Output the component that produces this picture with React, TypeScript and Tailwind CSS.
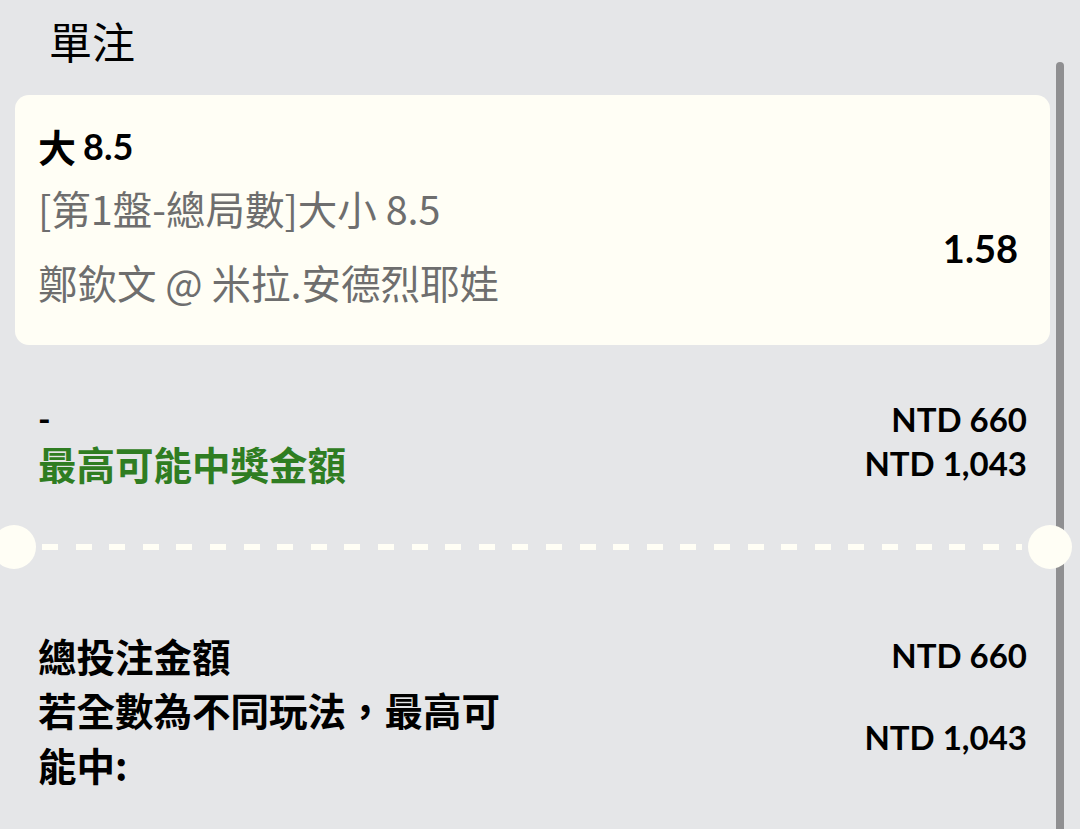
import React from 'react';

const font = { fontFamily: "Lato, 'Noto Sans CJK TC', sans-serif" };
const cjk = { fontFamily: "'Noto Sans CJK TC', sans-serif" };

function Dashes() {
  return (
    <div className="relative h-[46px] flex items-center">
      <div className="absolute left-[-8px] top-[1px] w-[44px] h-[44px] rounded-full bg-[#fffef5] z-10" />
      <div className="flex-1 ml-[42px] mr-[58px] h-[6px] bg-[repeating-linear-gradient(90deg,#fffef5_0_16px,transparent_16px_33.6px)]" />
      <div className="absolute left-[1028px] top-[1px] w-[44px] h-[44px] rounded-full bg-[#fffef5] z-10" />
    </div>
  );
}

export default function App() {
  return (
    <div className="relative w-[1080px] h-[829px] overflow-hidden bg-[#e5e6e8] text-black" style={font}>
      <div className="absolute left-[1056px] top-[62px] w-[8px] h-[800px] rounded-full bg-[#8f8f91]" />

      <div className="pl-[49px] pt-[13px] h-[95px]">
        <h1 className="text-[43px] leading-[54px] font-normal" style={cjk}>單注</h1>
      </div>

      <section className="ml-[15px] mr-[30px] h-[250px] rounded-[14px] bg-[#fffef5] pl-[23px] pr-[32px] pt-[29px]">
        <div className="h-[44px] flex items-center font-bold">
          <span className="text-[38px] leading-[44px] mr-[7px]" style={cjk}>大</span>
          <span className="text-[36px] leading-[44px]">8.5</span>
        </div>
        <div className="flex items-center justify-between mt-[3px]">
          <div className="text-[#6e6e6e] text-[39.5px] leading-[74px]" style={cjk}>
            <div>[第1盤-總局數]大小 8.5</div>
            <div>鄭欽文 @ 米拉.安德烈耶娃</div>
          </div>
          <div className="text-[38px] font-bold pt-[6px]">1.58</div>
        </div>
      </section>

      <section className="pl-[38px] pr-[53px] pt-[52px]">
        <div className="flex justify-between items-center h-[44px]">
          <span className="text-[34px] leading-[44px] font-bold">-</span>
          <span className="text-[33px] leading-[44px] font-bold">NTD 660</span>
        </div>
        <div className="flex justify-between items-center h-[44px]">
          <span className="text-[38.5px] leading-[44px] font-bold text-[#2f7d22]" style={cjk}>最高可能中獎金額</span>
          <span className="text-[33px] leading-[44px] font-bold">NTD 1,043</span>
        </div>
      </section>

      <div className="mt-[39px]">
        <Dashes />
      </div>

      <section className="pl-[38px] pr-[53px] pt-[63px]">
        <div className="flex justify-between items-center h-[44px]">
          <span className="text-[38.5px] leading-[44px] font-bold" style={cjk}>總投注金額</span>
          <span className="text-[33px] leading-[44px] font-bold">NTD 660</span>
        </div>
        <div className="flex justify-between items-center mt-[5px]">
          <span className="text-[38.5px] font-bold leading-[55px] w-[475px]" style={cjk}>若全數為不同玩法，最高可能中:</span>
          <span className="text-[33px] leading-[44px] font-bold">NTD 1,043</span>
        </div>
      </section>
    </div>
  );
}
